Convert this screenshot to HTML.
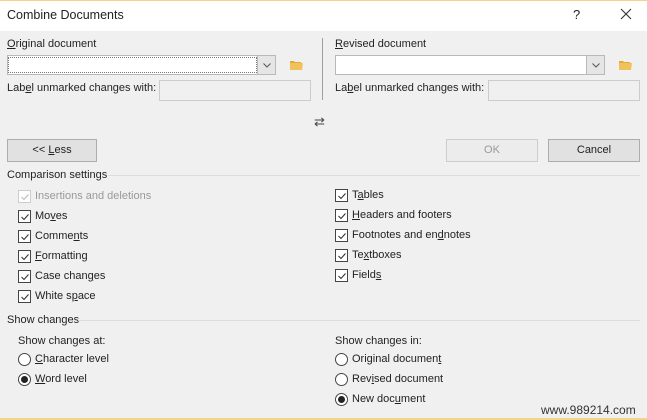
<!DOCTYPE html>
<html><head><style>
*{margin:0;padding:0;box-sizing:border-box}
body{width:647px;height:420px;background:#f0f0f0;font-family:"Liberation Sans",sans-serif;font-size:11px;color:#222;position:relative;overflow:hidden}
.a{position:absolute;white-space:nowrap}
.title{top:0;left:0;width:647px;height:31px;background:#fff;border-top:1px solid #f3d48a}
.box{background:#fff;border:1px solid #b9b9b9}
.dis{background:#f0f0f0;border:1px solid #ccc}
.btn{background:#e1e1e1;border:1px solid #adadad;text-align:center;line-height:21px;font-size:11px}
.cb{width:13px;height:13px;border:1px solid #444;background:#fff}
.cb svg{position:absolute;left:1px;top:1px}
.rd{width:13px;height:13px;border:1px solid #444;border-radius:50%;background:#fff}
.rd.on::after{content:"";position:absolute;left:2px;top:2px;width:7px;height:7px;border-radius:50%;background:#222}
.line{height:1px;background:#dcdcdc}
.dd{width:19px;height:20px;background:#e5e5e5;border:1px solid #b9b9b9}
.dd svg{position:absolute;left:5px;top:7px}
</style></head><body>
<div class="a title"></div>
<div class="a" style="left:7px;top:8px;font-size:12.5px;color:#222">Combine Documents</div>
<div class="a" style="left:573px;top:7px;font-size:13px">?</div>
<svg class="a" style="left:620px;top:8px" width="12" height="12"><path d="M1 1L11 11M11 1L1 11" stroke="#333" stroke-width="1.1"/></svg>

<div class="a" style="left:7px;top:38px"><u>O</u>riginal document</div>
<div class="a box" style="left:7px;top:55px;width:269px;height:20px"></div>
<div class="a" style="left:8px;top:57px;width:249px;height:16px;border:1px dotted #777"></div>
<div class="a dd" style="left:257px;top:55px"><svg width="8" height="5"><path d="M0.5 0.5L4 4L7.5 0.5" stroke="#555" fill="none"/></svg></div>
<svg class="a" style="left:289px;top:59px" width="15" height="12"><path d="M1 2h4l1 1h6v1H1z" fill="#e2aa3a"/><path d="M1 4h13l-1 7H1z" fill="#f2c25a"/></svg>
<div class="a" style="left:7px;top:82px">Lab<u>e</u>l unmarked changes with:</div>
<div class="a dis" style="left:159px;top:80px;width:152px;height:21px"></div>
<div class="a" style="left:322px;top:38px;width:1px;height:62px;background:#a0a0a0"></div>

<div class="a" style="left:335px;top:38px"><u>R</u>evised document</div>
<div class="a box" style="left:335px;top:55px;width:270px;height:20px"></div>
<div class="a dd" style="left:586px;top:55px"><svg width="8" height="5"><path d="M0.5 0.5L4 4L7.5 0.5" stroke="#555" fill="none"/></svg></div>
<svg class="a" style="left:618px;top:59px" width="15" height="12"><path d="M1 2h4l1 1h6v1H1z" fill="#e2aa3a"/><path d="M1 4h13l-1 7H1z" fill="#f2c25a"/></svg>
<div class="a" style="left:335px;top:82px">La<u>b</u>el unmarked changes with:</div>
<div class="a dis" style="left:488px;top:80px;width:152px;height:21px"></div>

<div class="a" style="left:314px;top:114px;font-size:13px;color:#444">⇄</div>

<div class="a btn" style="left:7px;top:139px;width:90px;height:23px">&lt;&lt; <u>L</u>ess</div>
<div class="a btn" style="left:446px;top:139px;width:92px;height:23px;background:#ececec;border-color:#ccc;color:#999">OK</div>
<div class="a btn" style="left:548px;top:139px;width:92px;height:23px">Cancel</div>

<div class="a" style="left:7px;top:169px">Comparison settings</div>
<div class="a line" style="left:108px;top:175px;width:532px"></div>

<div class="a cb" style="left:18px;top:190px;border-color:#ccc"><svg width="10" height="10"><path d="M1.5 5l2.5 2.5 4.5-5" stroke="#bbb" fill="none" stroke-width="1.1"/></svg></div>
<div class="a" style="left:35px;top:190px;color:#999">Insertions and deletions</div>
<div class="a cb" style="left:18px;top:210px"><svg width="10" height="10"><path d="M1.5 5l2.5 2.5 4.5-5" stroke="#333" fill="none" stroke-width="1.1"/></svg></div>
<div class="a" style="left:35px;top:210px">Mo<u>v</u>es</div>
<div class="a cb" style="left:18px;top:230px"><svg width="10" height="10"><path d="M1.5 5l2.5 2.5 4.5-5" stroke="#333" fill="none" stroke-width="1.1"/></svg></div>
<div class="a" style="left:35px;top:230px">Comme<u>n</u>ts</div>
<div class="a cb" style="left:18px;top:250px"><svg width="10" height="10"><path d="M1.5 5l2.5 2.5 4.5-5" stroke="#333" fill="none" stroke-width="1.1"/></svg></div>
<div class="a" style="left:35px;top:250px"><u>F</u>ormatting</div>
<div class="a cb" style="left:18px;top:270px"><svg width="10" height="10"><path d="M1.5 5l2.5 2.5 4.5-5" stroke="#333" fill="none" stroke-width="1.1"/></svg></div>
<div class="a" style="left:35px;top:270px">Case chan<u>g</u>es</div>
<div class="a cb" style="left:18px;top:290px"><svg width="10" height="10"><path d="M1.5 5l2.5 2.5 4.5-5" stroke="#333" fill="none" stroke-width="1.1"/></svg></div>
<div class="a" style="left:35px;top:290px">White s<u>p</u>ace</div>

<div class="a cb" style="left:335px;top:189px"><svg width="10" height="10"><path d="M1.5 5l2.5 2.5 4.5-5" stroke="#333" fill="none" stroke-width="1.1"/></svg></div>
<div class="a" style="left:352px;top:189px">T<u>a</u>bles</div>
<div class="a cb" style="left:335px;top:209px"><svg width="10" height="10"><path d="M1.5 5l2.5 2.5 4.5-5" stroke="#333" fill="none" stroke-width="1.1"/></svg></div>
<div class="a" style="left:352px;top:209px"><u>H</u>eaders and footers</div>
<div class="a cb" style="left:335px;top:229px"><svg width="10" height="10"><path d="M1.5 5l2.5 2.5 4.5-5" stroke="#333" fill="none" stroke-width="1.1"/></svg></div>
<div class="a" style="left:352px;top:229px">Footnotes and en<u>d</u>notes</div>
<div class="a cb" style="left:335px;top:249px"><svg width="10" height="10"><path d="M1.5 5l2.5 2.5 4.5-5" stroke="#333" fill="none" stroke-width="1.1"/></svg></div>
<div class="a" style="left:352px;top:249px">Te<u>x</u>tboxes</div>
<div class="a cb" style="left:335px;top:269px"><svg width="10" height="10"><path d="M1.5 5l2.5 2.5 4.5-5" stroke="#333" fill="none" stroke-width="1.1"/></svg></div>
<div class="a" style="left:352px;top:269px">Field<u>s</u></div>

<div class="a" style="left:7px;top:314px">Show changes</div>
<div class="a line" style="left:78px;top:320px;width:562px"></div>

<div class="a" style="left:18px;top:335px">Show changes at:</div>
<div class="a rd" style="left:18px;top:353px"></div>
<div class="a" style="left:35px;top:353px"><u>C</u>haracter level</div>
<div class="a rd on" style="left:18px;top:373px"></div>
<div class="a" style="left:35px;top:373px"><u>W</u>ord level</div>

<div class="a" style="left:335px;top:335px">Show changes in:</div>
<div class="a rd" style="left:335px;top:353px"></div>
<div class="a" style="left:352px;top:353px">Original documen<u>t</u></div>
<div class="a rd" style="left:335px;top:373px"></div>
<div class="a" style="left:352px;top:373px">Rev<u>i</u>sed document</div>
<div class="a rd on" style="left:335px;top:393px"></div>
<div class="a" style="left:352px;top:393px">New doc<u>u</u>ment</div>

<div class="a" style="left:541px;top:403px;font-size:12px;color:#333">www.989214.com</div>
<div class="a" style="left:0;top:418px;width:647px;height:2px;background:#f3d48a"></div>
</body></html>
